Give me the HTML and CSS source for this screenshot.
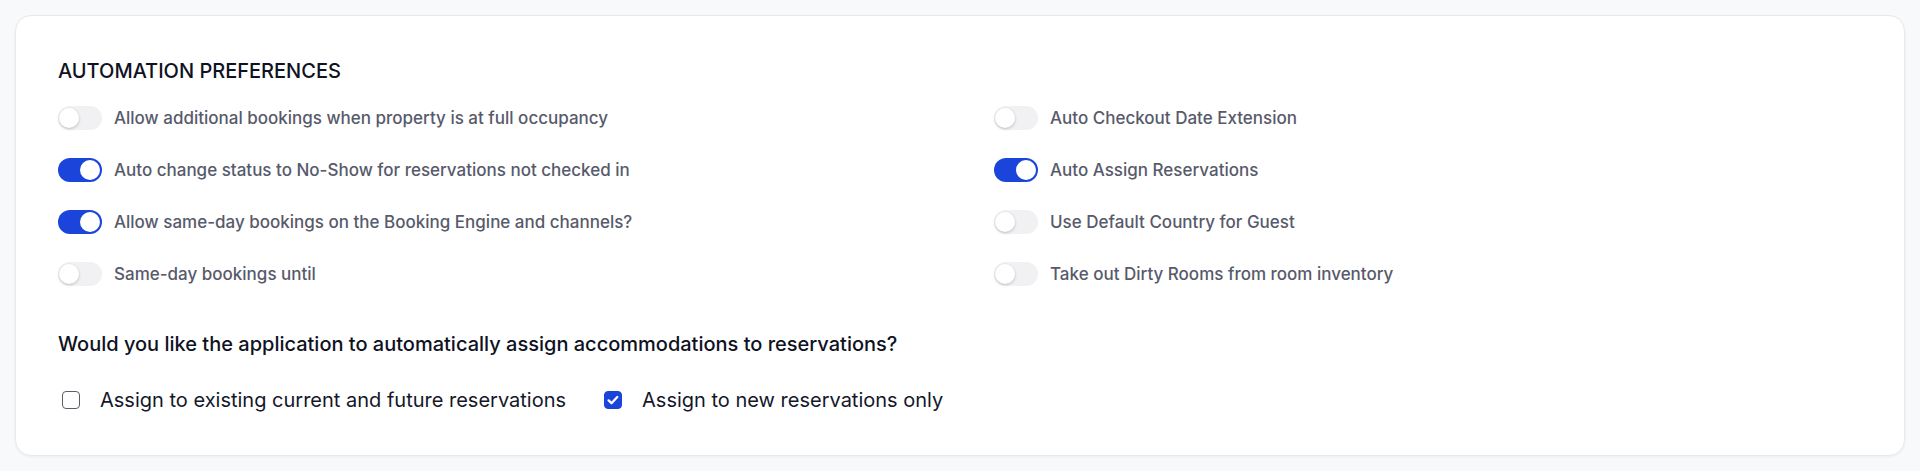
FILE: index.html
```html
<!DOCTYPE html>
<html lang="en">
<head>
<meta charset="utf-8">
<title>Automation Preferences</title>
<link rel="stylesheet" href="styles.css">
</head>
<body>
<div class="card">
  <h2 class="title">AUTOMATION PREFERENCES</h2>
  <div class="grid">
    <div class="col">
      <div class="row"><span class="toggle"></span><span class="label">Allow additional bookings when property is at full occupancy</span></div>
      <div class="row"><span class="toggle on"></span><span class="label">Auto change status to No-Show for reservations not checked in</span></div>
      <div class="row"><span class="toggle on"></span><span class="label">Allow same-day bookings on the Booking Engine and channels?</span></div>
      <div class="row"><span class="toggle"></span><span class="label">Same-day bookings until</span></div>
    </div>
    <div class="col">
      <div class="row"><span class="toggle"></span><span class="label">Auto Checkout Date Extension</span></div>
      <div class="row"><span class="toggle on"></span><span class="label">Auto Assign Reservations</span></div>
      <div class="row"><span class="toggle"></span><span class="label">Use Default Country for Guest</span></div>
      <div class="row"><span class="toggle"></span><span class="label">Take out Dirty Rooms from room inventory</span></div>
    </div>
  </div>
  <p class="question">Would you like the application to automatically assign accommodations to reservations?</p>
  <div class="options">
    <label class="option"><span class="box"></span><span>Assign to existing current and future reservations</span></label>
    <label class="option"><span class="box checked"><svg viewBox="0 0 18 18" width="18" height="18"><path d="M4.6 9.4l2.9 2.8 5.8-6.2" fill="none" stroke="#fff" stroke-width="2.3" stroke-linecap="round" stroke-linejoin="round"/></svg></span><span>Assign to new reservations only</span></label>
  </div>
</div>
</body>
</html>
```
FILE: styles.css
```css
* { box-sizing: border-box; }
html, body { margin: 0; }
body {
  background: #f8f9fb;
  padding: 15px;
  font-family: Inter, "Noto Sans", "Liberation Sans", sans-serif;
  height: 471px;
}
.card {
  background: #fff;
  border: 1px solid #e8e9ed;
  border-radius: 16px;
  box-shadow: 0 1px 3px rgba(16, 24, 40, 0.05);
  padding: 41px 42px 0;
  height: 441px;
}
.title {
  margin: 0;
  font-size: 20px;
  line-height: 28px;
  font-weight: 500;
  color: #0f1222;
}
.grid {
  display: grid;
  grid-template-columns: 936px 1fr;
  margin-top: 21px;
}
.col {
  display: flex;
  flex-direction: column;
  gap: 28px;
}
.row {
  display: flex;
  align-items: center;
  height: 24px;
  gap: 12px;
}
.toggle {
  position: relative;
  width: 44px;
  height: 24px;
  border-radius: 12px;
  background: #f1f1f3;
  flex: none;
}
.toggle::after {
  content: "";
  position: absolute;
  top: 2px;
  left: 1px;
  width: 20px;
  height: 20px;
  border-radius: 50%;
  background: #fff;
  box-shadow: 0 1px 3px rgba(0, 0, 0, 0.22);
}
.toggle.on { background: #1b45da; }
.toggle.on::after {
  left: 22px;
  box-shadow: none;
}
.label {
  font-size: 17px;
  font-weight: 500;
  color: #575a6b;
  line-height: 24px;
}
.question {
  margin: 44px 0 0;
  font-size: 20px;
  line-height: 28px;
  font-weight: 500;
  color: #0f1222;
}
.options {
  display: flex;
  gap: 34px;
  margin-top: 28px;
}
.option {
  display: flex;
  align-items: center;
  gap: 20px;
  font-size: 20px;
  line-height: 28px;
  color: #14172a;
}
.box {
  width: 18px;
  height: 18px;
  margin-left: 4px;
  border: 1.5px solid #5a5d6b;
  border-radius: 4px;
  flex: none;
  display: flex;
}
.box.checked {
  background: #1b45da;
  border-color: #1b45da;
}
.box.checked svg { margin: -1.5px; }
```
